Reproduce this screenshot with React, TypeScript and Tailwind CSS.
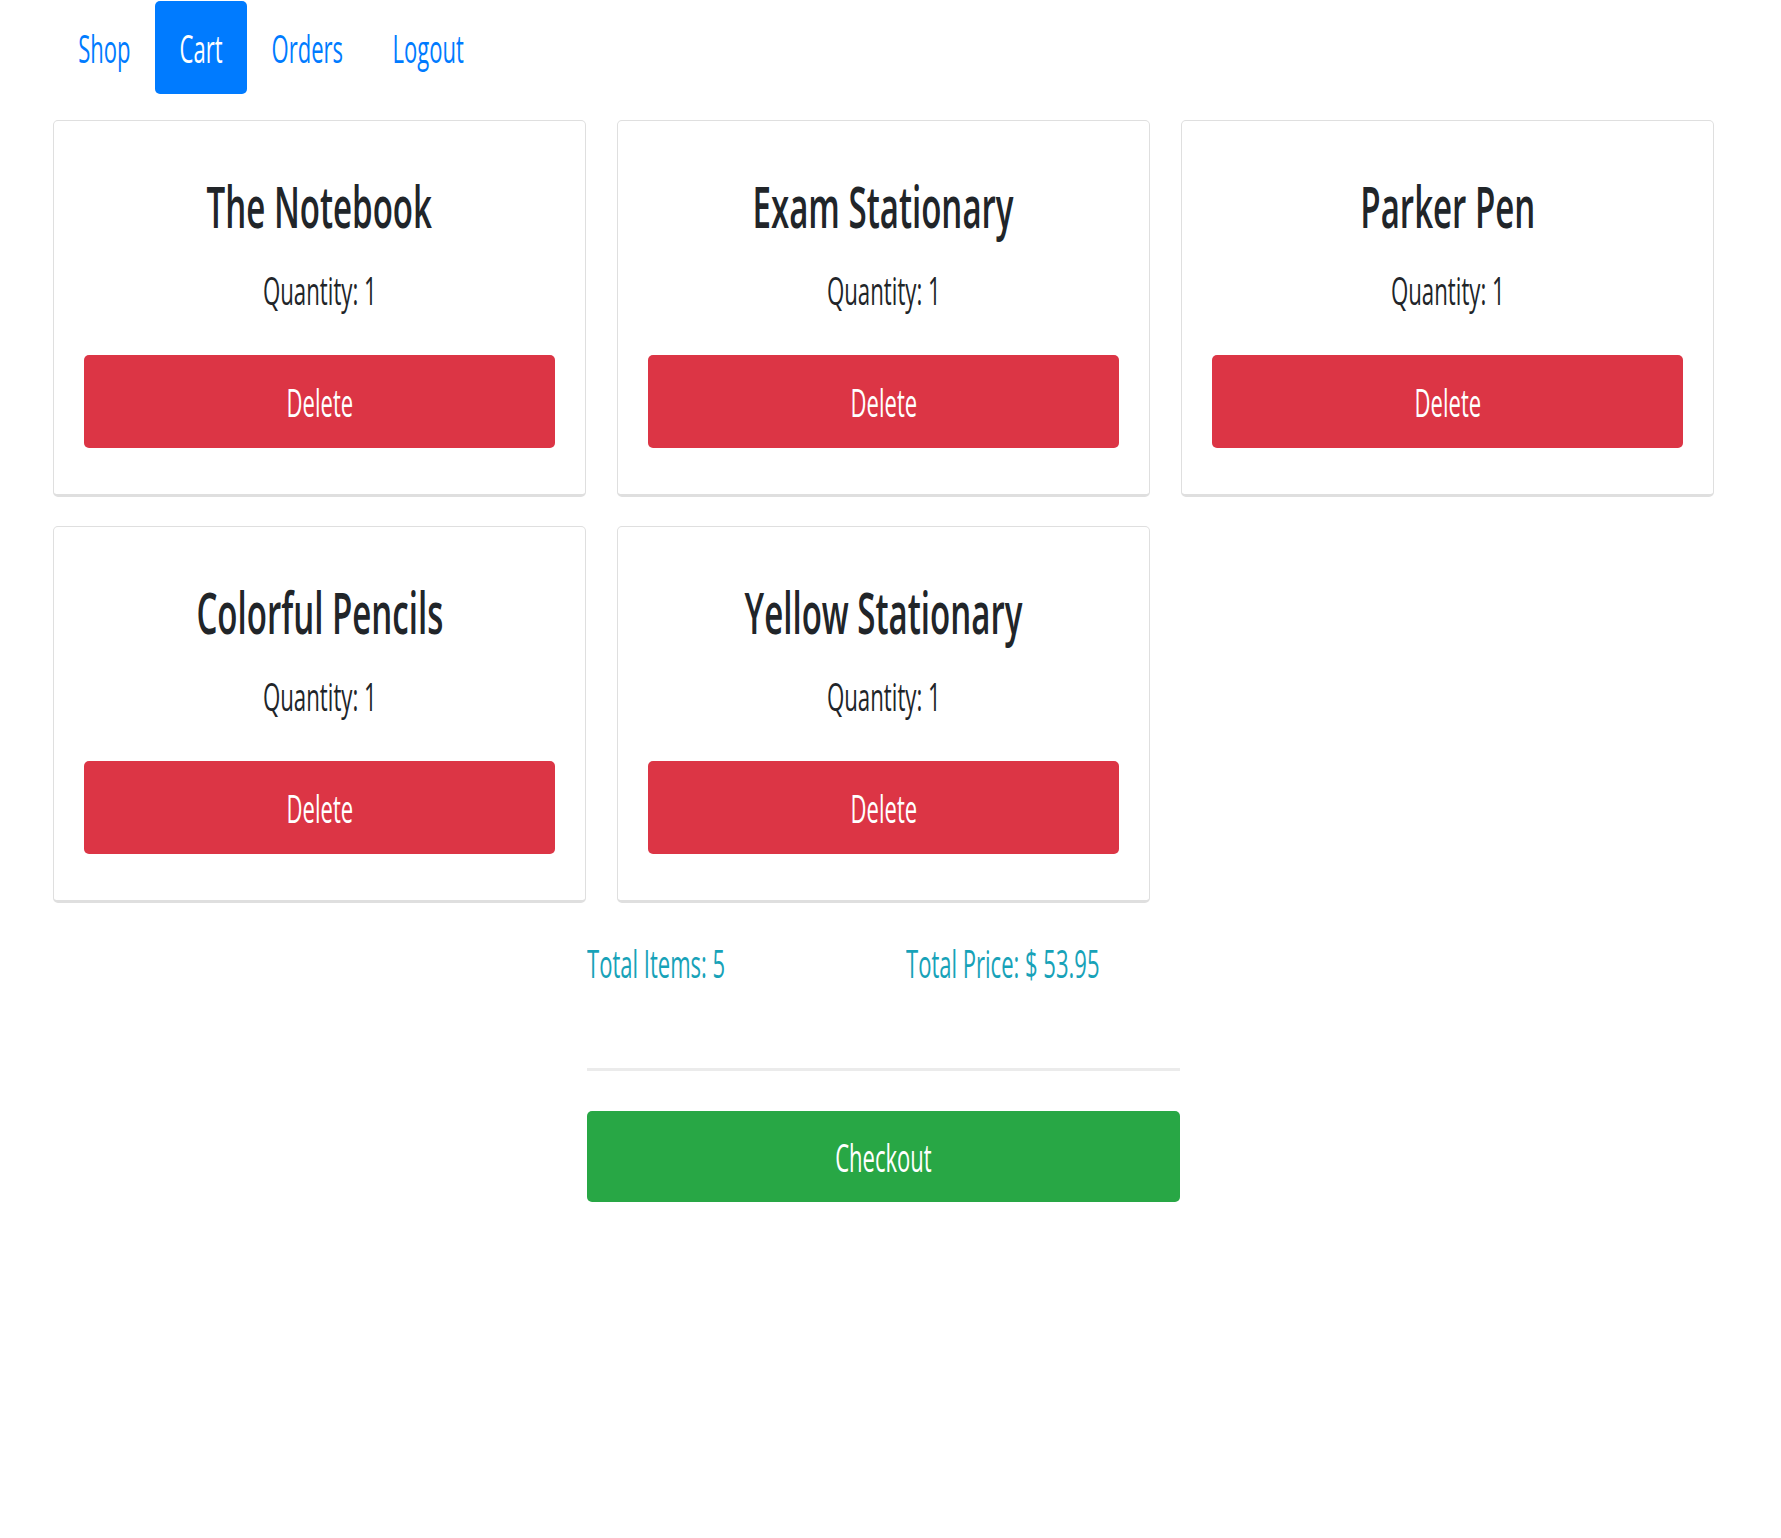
import React from "react";

const items = [
  "The Notebook",
  "Exam Stationary",
  "Parker Pen",
  "Colorful Pencils",
  "Yellow Stationary",
];

function NavLink({ label, w, active }: { label: string; w: string; active?: boolean }) {
  return (
    <a
      href="#"
      className={
        "flex h-[93px] items-center rounded-[5px] px-[25px] text-[39px] leading-[93px] " +
        (active ? "bg-[#007bff] text-white" : "text-[#007bff]")
      }
    >
      <span className={"flex justify-center " + w}>
        <span className="inline-block shrink-0 scale-x-[0.565] whitespace-nowrap">{label}</span>
      </span>
    </a>
  );
}

function Card({ title }: { title: string }) {
  return (
    <div className="flex flex-col rounded-[5px] border border-b-[3px] border-[#dfdfdf] bg-white px-[30px] pt-[46px] pb-[46px]">
      <div className="flex h-[78px] justify-center text-[57px] font-semibold leading-[78px] text-[#212529]">
        <span className="inline-block shrink-0 scale-x-[0.58] whitespace-nowrap">{title}</span>
      </div>
      <div className="mt-[18px] flex h-[53px] justify-center text-[39px] leading-[53px] text-[#212529]">
        <span className="inline-block shrink-0 scale-x-[0.57] whitespace-nowrap">Quantity: 1</span>
      </div>
      <button className="mt-[39px] flex h-[93px] w-full items-center justify-center rounded-[5px] bg-[#dc3545] text-[39px] leading-[93px] text-white">
        <span className="inline-block shrink-0 scale-x-[0.565] whitespace-nowrap">Delete</span>
      </button>
    </div>
  );
}

export default function App() {
  return (
    <div className="min-h-[1538px] w-full bg-white font-['Open_Sans',sans-serif]">
      <nav className="ml-[53px] flex pt-px">
        <NavLink label="Shop" w="w-[52px]" />
        <NavLink label="Cart" w="w-[42px]" active />
        <NavLink label="Orders" w="w-[70px]" />
        <NavLink label="Logout" w="w-[73px]" />
      </nav>

      <div className="ml-[53px] mt-[26px] w-[1661px]">
        <div className="grid grid-cols-3 gap-x-[31px] gap-y-[29px]">
          {items.map((t) => (
            <Card key={t} title={t} />
          ))}
        </div>

        <div className="mx-auto w-[593px]">
          <div className="mt-[33px] grid h-[53px] grid-cols-2 text-[39px] leading-[53px] text-[#17a2b8]">
            <div className="flex">
              <span className="inline-block shrink-0 origin-left scale-x-[0.565] whitespace-nowrap">Total Items: 5</span>
            </div>
            <div className="flex pl-[22px]">
              <span className="inline-block shrink-0 origin-left scale-x-[0.565] whitespace-nowrap">Total Price: $ 53.95</span>
            </div>
          </div>
          <div className="mt-[79px] h-[3px] w-full bg-[#ebebeb]" />
          <button className="mt-[40px] flex h-[91px] w-full items-center justify-center rounded-[5px] bg-[#28a745] text-[39px] leading-[91px] text-white">
            <span className="inline-block shrink-0 scale-x-[0.565] whitespace-nowrap">Checkout</span>
          </button>
        </div>
      </div>
    </div>
  );
}
